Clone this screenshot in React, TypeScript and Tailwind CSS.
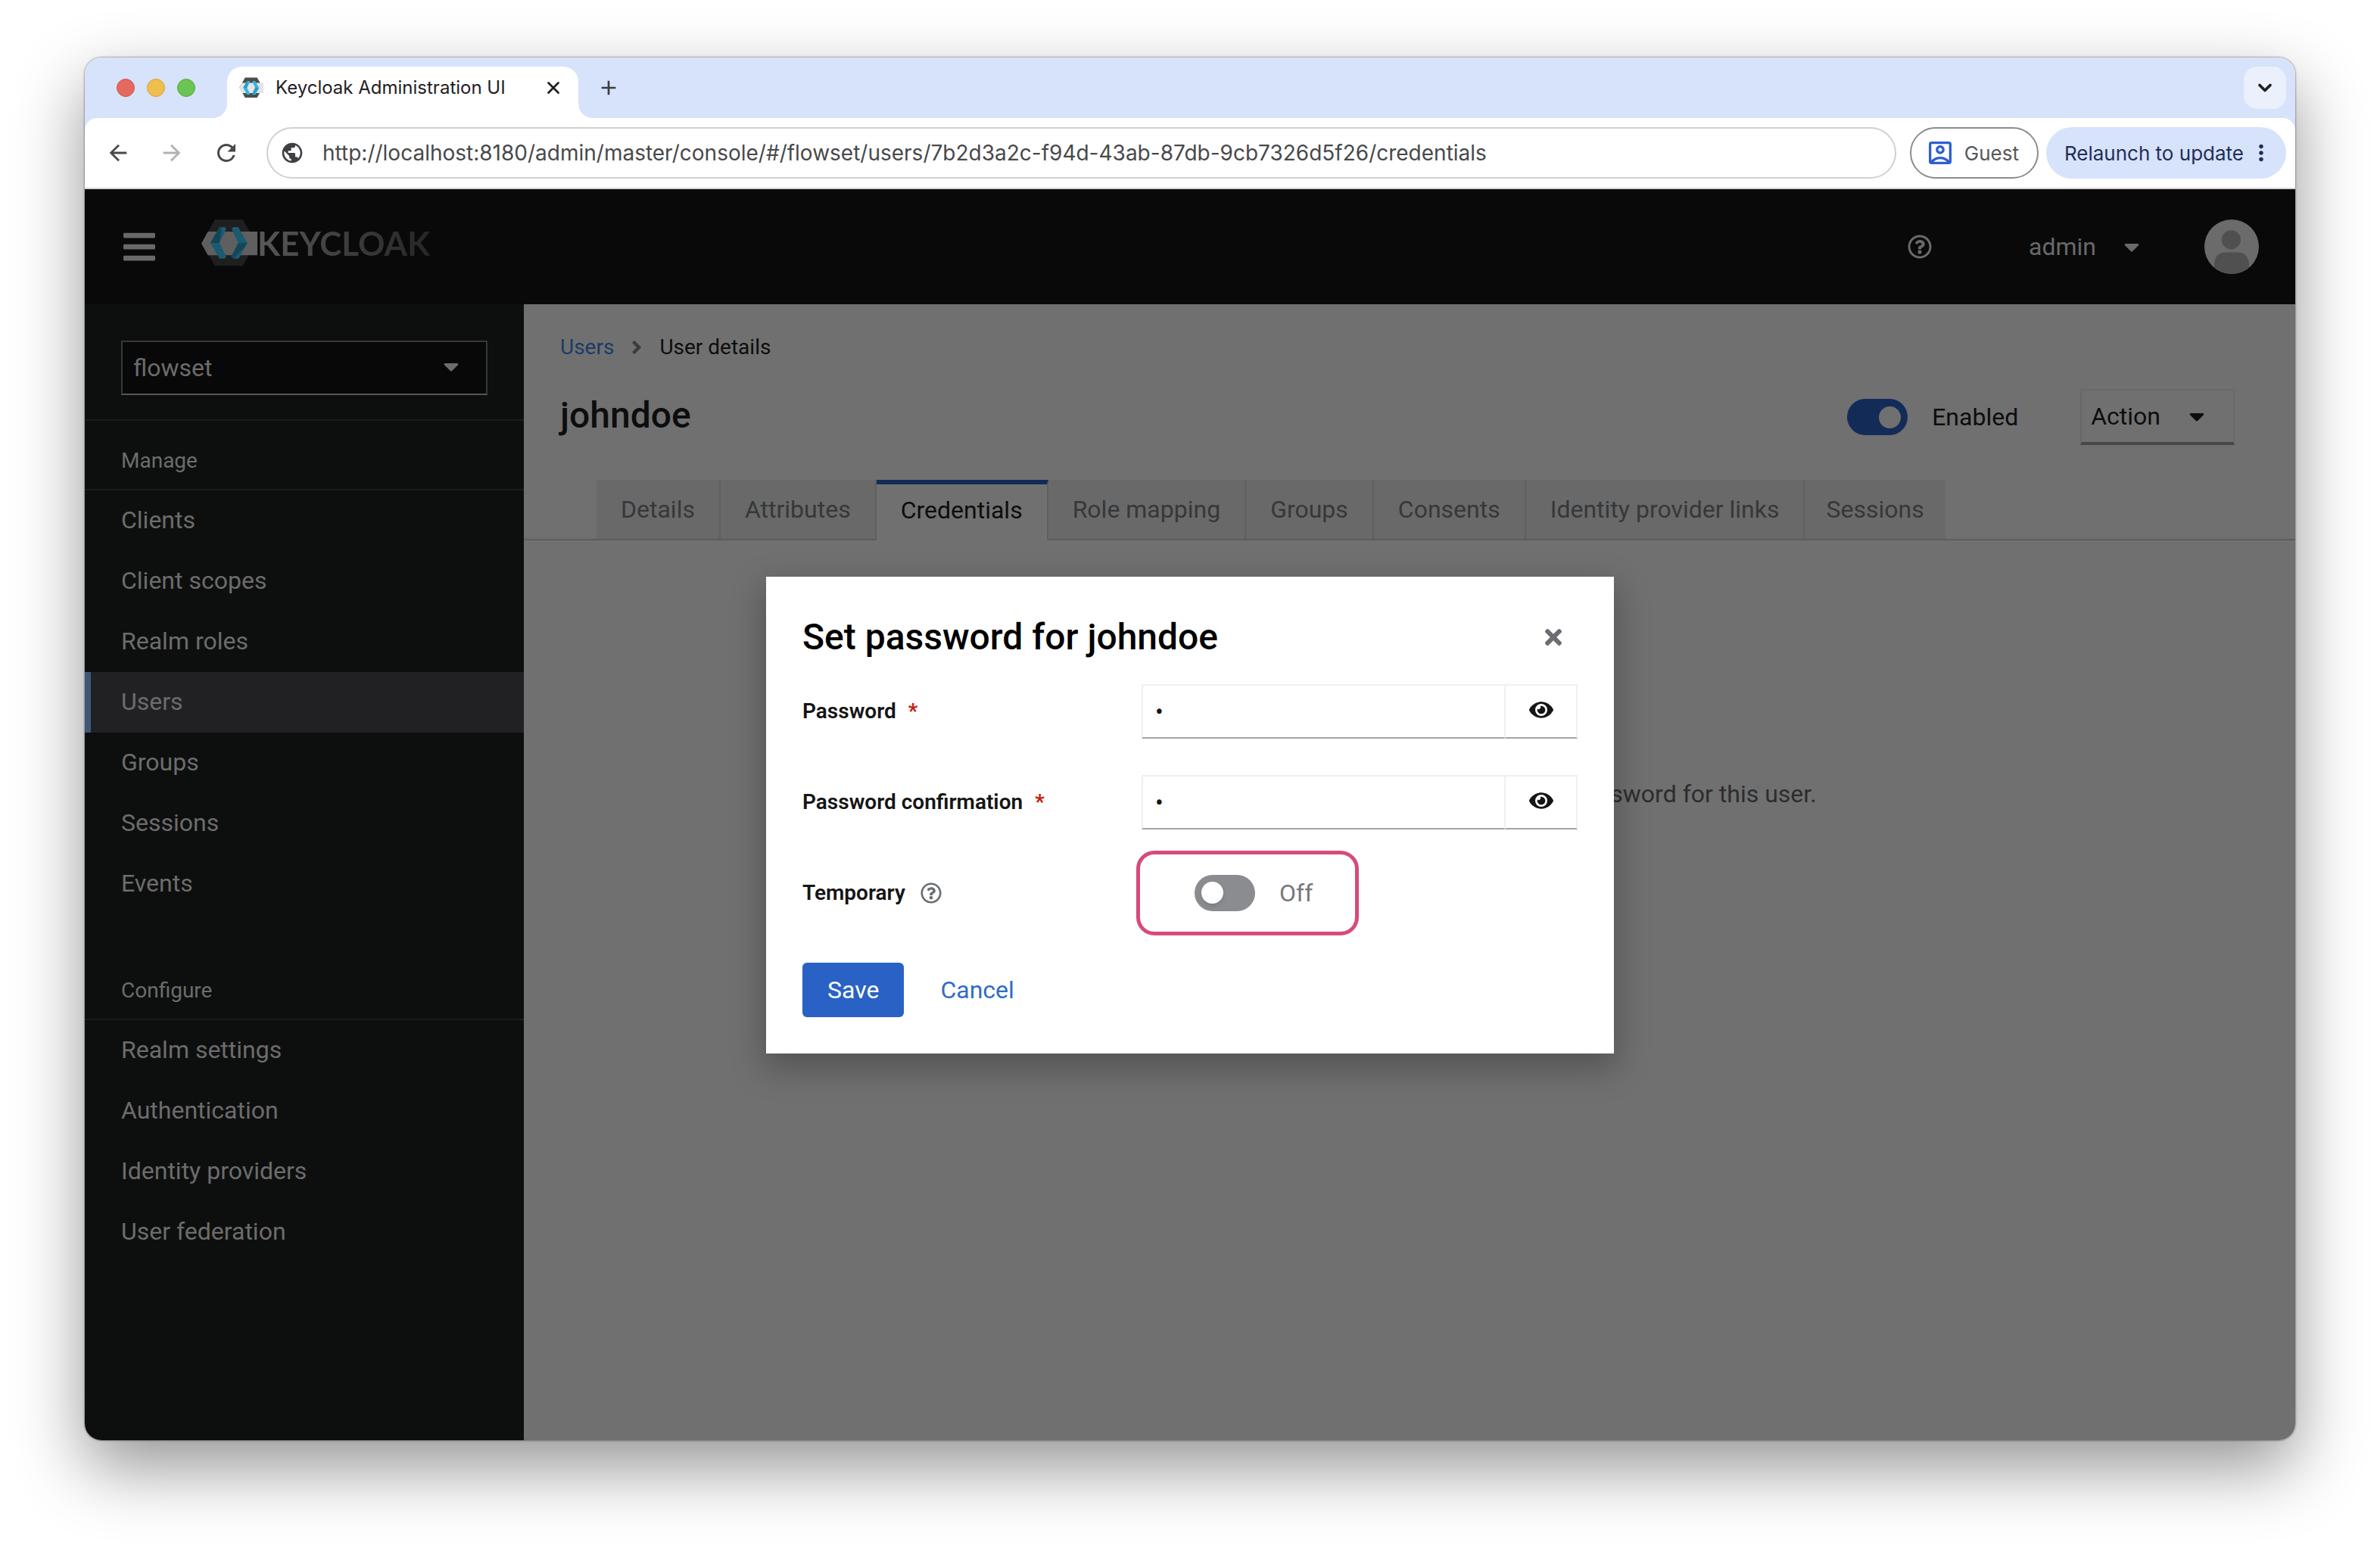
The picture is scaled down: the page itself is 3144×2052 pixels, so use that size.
import { useState } from "react";
import { ChevronDown, X } from "lucide-react";
import {
  FaAngleRight,
  FaBars,
  FaCaretDown,
  FaEye,
  FaRegQuestionCircle,
  FaTimes,
} from "react-icons/fa";
import {
  MdAdd,
  MdArrowBack,
  MdArrowForward,
  MdMoreVert,
  MdOutlineAccountBox,
  MdPublic,
  MdRefresh,
} from "react-icons/md";

const manageLinks = [
  "Clients",
  "Client scopes",
  "Realm roles",
  "Users",
  "Groups",
  "Sessions",
  "Events",
];

const configureLinks = [
  "Realm settings",
  "Authentication",
  "Identity providers",
  "User federation",
];

const tabs = [
  "Details",
  "Attributes",
  "Credentials",
  "Role mapping",
  "Groups",
  "Consents",
  "Identity provider links",
  "Sessions",
];

function KeycloakMark({
  className,
  hex,
  band,
  blue,
  shade,
}: {
  className: string;
  hex: string;
  band: string;
  blue: string;
  shade: string;
}) {
  return (
    <svg viewBox="48 60 222 190" className={className} aria-hidden="true">
      <path d="M102 62H212L265 154L212 246H102L50 154Z" fill={hex} />
      <path d="M74 110H270V204H74L48 157Z" fill={band} />
      <path d="M120 92H140L147 98L120 155L147 211L140 217H120L84 155Z" fill={blue} />
      <path d="M120 92H128L120 155H84Z" fill={shade} opacity="0.7" />
      <path d="M168 98L175 92H194L230 155L196 217H175L166 211L194 155Z" fill={blue} />
      <path d="M194 155H230L220 172L175 217L166 211Z" fill={shade} opacity="0.6" />
    </svg>
  );
}

function TabFlare({ className }: { className: string }) {
  return (
    <svg viewBox="0 0 20 20" className={className} aria-hidden="true">
      <path d="M20 0V20H0C12 20 20 12 20 0Z" fill="#fff" />
    </svg>
  );
}

function BrowserBar() {
  return (
    <div className="bg-[#d7e2fb] font-[Inter,sans-serif]">
      <div className="flex h-20 items-end pl-[42px] pr-3">
        <div className="flex h-20 items-center gap-4">
          <span className="size-6 rounded-full border border-[#d55247] bg-[#e4695e]" />
          <span className="size-6 rounded-full border border-[#d9a23a] bg-[#f0bd4f]" />
          <span className="size-6 rounded-full border border-[#56a93f] bg-[#6bc453]" />
        </div>
        <div className="ml-[22px] flex items-end">
          <TabFlare className="size-5" />
          <div className="flex h-[68px] w-[464px] items-center rounded-t-[20px] bg-white pb-3 pl-4 pr-5 text-[#1f2023]">
            <KeycloakMark
              className="h-7 w-8"
              hex="#4d4d4d"
              band="#e4e4e4"
              blue="#35b5e2"
              shade="#1b93c0"
            />
            <span className="ml-4 flex-1 whitespace-nowrap text-[24px]">
              Keycloak Administration UI
            </span>
            <button aria-label="Close tab">
              <X size={26} strokeWidth={2.6} />
            </button>
          </div>
          <TabFlare className="size-5 -scale-x-100" />
        </div>
        <button aria-label="New tab" className="mb-6 ml-1 text-[#3c3d40]">
          <MdAdd size={32} />
        </button>
        <button
          aria-label="Search tabs"
          className="mb-3 ml-auto flex size-14 items-center justify-center rounded-[18px] bg-[#eaf1fc] text-[#1f2023]"
        >
          <ChevronDown size={28} strokeWidth={3.2} />
        </button>
      </div>
      <div className="flex h-[94px] items-center rounded-t-[16px] border-b-2 border-[#d5d5d5] bg-white pl-[27px] pr-3 text-[#48494b]">
        <button aria-label="Back">
          <MdArrowBack size={34} />
        </button>
        <button aria-label="Forward" className="ml-[37px] text-[#b0b1b3]">
          <MdArrowForward size={34} />
        </button>
        <button aria-label="Reload" className="ml-[37px] mr-[35px]">
          <MdRefresh size={36} />
        </button>
        <div className="flex h-[68px] flex-1 items-center rounded-full border-2 border-[#cfd0d1] pl-4">
          <MdPublic size={32} className="text-[#3f4043]" />
          <input
            aria-label="Address"
            className="ml-6 flex-1 text-[28px] text-[#48494b] outline-none"
            defaultValue="http://localhost:8180/admin/master/console/#/flowset/users/7b2d3a2c-f94d-43ab-87db-9cb7326d5f26/credentials"
          />
        </div>
        <button className="ml-[18px] flex h-[68px] items-center gap-3 rounded-full border-2 border-[#8b8c8d] pl-[18px] pr-6 text-[26px] text-[#56585b]">
          <MdOutlineAccountBox size={40} className="text-[#2f5fd0]" />
          Guest
        </button>
        <button className="ml-[10px] flex h-[68px] items-center gap-[6px] rounded-full bg-[#d7e2fb] pl-6 pr-4 text-[26px] text-[#1f2f57]">
          Relaunch to update
          <MdMoreVert size={34} />
        </button>
      </div>
    </div>
  );
}

function Masthead() {
  return (
    <header className="flex h-[152px] items-center bg-[#090909] px-12 text-[#696969]">
      <button aria-label="Global navigation">
        <FaBars size={48} />
      </button>
      <a href="#" className="mb-2.5 ml-[58px] flex items-center">
        <KeycloakMark
          className="h-16 w-[74px]"
          hex="#1f1f1f"
          band="#5f5f5f"
          blue="#1c5a72"
          shade="#0f3b4c"
        />
        <span className="bg-gradient-to-r from-[#585858] to-[#262626] bg-clip-text font-[Lato,sans-serif] text-[44px] leading-none font-bold text-transparent">
          KEYCLOAK
        </span>
      </a>
      <button aria-label="Help" className="ml-auto">
        <FaRegQuestionCircle size={32} />
      </button>
      <button className="ml-32 flex items-center gap-[31px] text-[32px]">
        admin
        <FaCaretDown size={32} />
      </button>
      <svg viewBox="0 0 36 36" className="ml-20 size-18" role="img" aria-label="Avatar">
        <clipPath id="avatar">
          <circle cx="18" cy="18" r="18" />
        </clipPath>
        <g clipPath="url(#avatar)">
          <rect width="36" height="36" fill="#6b6b6b" />
          <circle cx="17.7" cy="13.4" r="6.3" fill="#505050" />
          <path
            d="M6.5 32V29C7 24.500 9.500 21.800 13.500 21.800H22.500C26.500 21.800 29 24.500 29.500 29V32L23 36H12Z"
            fill="#505050"
          />
        </g>
      </svg>
    </header>
  );
}

function NavSection({
  title,
  links,
  current,
  onSelect,
}: {
  title: string;
  links: string[];
  current: string;
  onSelect: (link: string) => void;
}) {
  return (
    <section>
      <h2 className="flex h-[92px] items-center border-b-2 border-[#1a1c1c] px-12 pt-4 text-[28px]">
        {title}
      </h2>
      <ul>
        {links.map((link) => (
          <li key={link}>
            <a
              href="#"
              onClick={() => onSelect(link)}
              className={
                link === current
                  ? "flex h-20 items-center border-l-8 border-[#3d5878] bg-[#212124] pb-0.5 pl-10 text-[32px]"
                  : "flex h-20 items-center pb-0.5 pl-12 text-[32px]"
              }
            >
              {link}
            </a>
          </li>
        ))}
      </ul>
    </section>
  );
}

function Sidebar() {
  const [current, setCurrent] = useState("Users");

  return (
    <nav className="w-[580px] shrink-0 bg-[#0d0f0e] text-[#6c6c6c]">
      <div className="border-b-2 border-[#1a1c1c] px-12 pt-12 pb-8">
        <div className="relative">
          <select
            aria-label="Realm"
            className="block h-[72px] w-full appearance-none border-2 border-[#363838] border-b-[#555757] bg-[#080808] px-[14px] text-[32px]"
          >
            <option>flowset</option>
          </select>
          <FaCaretDown
            size={32}
            className="pointer-events-none absolute top-[18px] right-8"
          />
        </div>
      </div>
      <NavSection
        title="Manage"
        links={manageLinks}
        current={current}
        onSelect={setCurrent}
      />
      <div className="mt-12">
        <NavSection
          title="Configure"
          links={configureLinks}
          current={current}
          onSelect={setCurrent}
        />
      </div>
    </nav>
  );
}

function UserDetails() {
  return (
    <main className="flex-1 bg-[#707070] text-[#0d0d0d]">
      <div className="flex items-center gap-4 px-12 pt-9 text-[28px] leading-[42px]">
        <a href="#" className="text-[#1b3a68]">
          Users
        </a>
        <FaAngleRight size={28} className="text-[#3c3c3c]" />
        <span>User details</span>
      </div>
      <div className="mt-[34px] flex h-[74px] items-center px-12 pr-20">
        <h1 className="mb-1 text-[48px] leading-none font-medium">johndoe</h1>
        <label className="ml-auto flex items-center gap-8 text-[32px]">
          <input
            type="checkbox"
            role="switch"
            defaultChecked
            className="flex h-12 w-20 appearance-none items-center justify-end rounded-full bg-[#132c57] pr-[9px] before:size-[29px] before:rounded-full before:bg-[#707070]"
          />
          Enabled
        </label>
        <button className="ml-[82px] flex h-[74px] items-center gap-8 border-2 border-b-4 border-[#696969] border-b-[#474747] pl-3 pr-8 text-[32px]">
          Action
          <FaCaretDown size={32} />
        </button>
      </div>
      <div className="mt-[46px] flex border-b-2 border-[#5c5c5c] pl-24" role="tablist">
        {tabs.map((tab) => (
          <button
            key={tab}
            role="tab"
            aria-selected={tab === "Credentials"}
            className={
              tab === "Credentials"
                ? "-mb-[2px] h-20 border-t-6 border-r-2 border-[#5f5f5f] border-t-[#132c57] bg-[#707070] px-8 pb-1.5 text-[32px]"
                : "h-[78px] border-r-2 border-[#5f5f5f] bg-[#696969] px-8 text-[32px] text-[#35383a] last:border-r-0 last:px-7"
            }
          >
            {tab}
          </button>
        ))}
      </div>
      <p className="mt-[311px] text-center text-[32px] text-[#2b2d2f]">
        This user does not have any credentials. You can set password for this
        user.
      </p>
    </main>
  );
}

function PasswordField({ id, label }: { id: string; label: string }) {
  const [visible, setVisible] = useState(false);

  return (
    <div className="flex h-[72px] items-center">
      <label htmlFor={id} className="w-[448px] text-[28px] font-semibold">
        {label}
        <span className="ml-4 text-[#c9190b]">*</span>
      </label>
      <div className="flex h-full flex-1">
        <input
          id={id}
          type={visible ? "text" : "password"}
          defaultValue="1"
          className="min-w-0 flex-1 border-2 border-[#f0f0f0] border-b-[#a3a3a3] bg-white px-4 text-[32px] outline-none"
        />
        <button
          type="button"
          aria-label="Show password"
          onClick={() => setVisible(!visible)}
          className="flex w-[95px] items-center justify-center border-2 border-l-0 border-[#f0f0f0] border-b-[#a3a3a3] pb-1"
        >
          <FaEye size={32} />
        </button>
      </div>
    </div>
  );
}

function SetPasswordDialog() {
  return (
    <div
      role="dialog"
      aria-labelledby="dialog-title"
      className="w-[1120px] bg-white px-12 pt-12 pb-12 text-[#151515] shadow-[0_16px_40px_4px_rgba(0,0,0,0.25)]"
    >
      <div className="flex h-16 items-center justify-between pr-4">
        <h2 id="dialog-title" className="text-[48px] leading-[64px] font-medium text-black">
          Set password for johndoe
        </h2>
        <button aria-label="Close" className="text-[#6a6e73]">
          <FaTimes size={32} />
        </button>
      </div>
      <form className="mt-[30px]">
        <div className="flex flex-col gap-12">
          <PasswordField id="password" label="Password" />
          <PasswordField id="confirmation" label="Password confirmation" />
          <div className="flex h-[72px] items-center">
            <div className="flex w-[441px] items-center gap-5 text-[28px] font-semibold">
              <label htmlFor="temporary">Temporary</label>
              <FaRegQuestionCircle size={28} className="text-[#6a6e73]" />
            </div>
            <div className="flex h-28 w-[294px] shrink-0 items-center gap-8 rounded-[24px] border-5 border-[#d64b7b] pl-[72px] text-[32px] text-[#74787d]">
              <input
                id="temporary"
                type="checkbox"
                role="switch"
                className="flex h-12 w-20 appearance-none items-center rounded-full bg-[#8a8c90] pl-[9px] before:size-[29px] before:rounded-full before:bg-white before:shadow-md"
              />
              Off
            </div>
          </div>
        </div>
        <div className="mt-14 flex items-center text-[32px]">
          <button type="button" className="h-[72px] rounded-[6px] bg-[#2962c4] px-[33px] text-white">
            Save
          </button>
          <button type="button" className="ml-4 px-8 text-[#2f6cca]">
            Cancel
          </button>
        </div>
      </form>
    </div>
  );
}

export default function App() {
  return (
    <div className="flex min-h-screen flex-col bg-white px-28 pt-[76px] pb-[149px]">
      <div className="flex flex-1 flex-col overflow-hidden rounded-[22px] font-[Roboto,sans-serif] shadow-[0_0_2px_1px_rgba(0,0,0,0.3),0_36px_90px_rgba(0,0,0,0.42)]">
        <BrowserBar />
        <div className="relative flex flex-1 flex-col">
          <Masthead />
          <div className="flex flex-1">
            <Sidebar />
            <UserDetails />
          </div>
          <div className="absolute inset-0 flex items-center justify-center">
            <SetPasswordDialog />
          </div>
        </div>
      </div>
    </div>
  );
}
